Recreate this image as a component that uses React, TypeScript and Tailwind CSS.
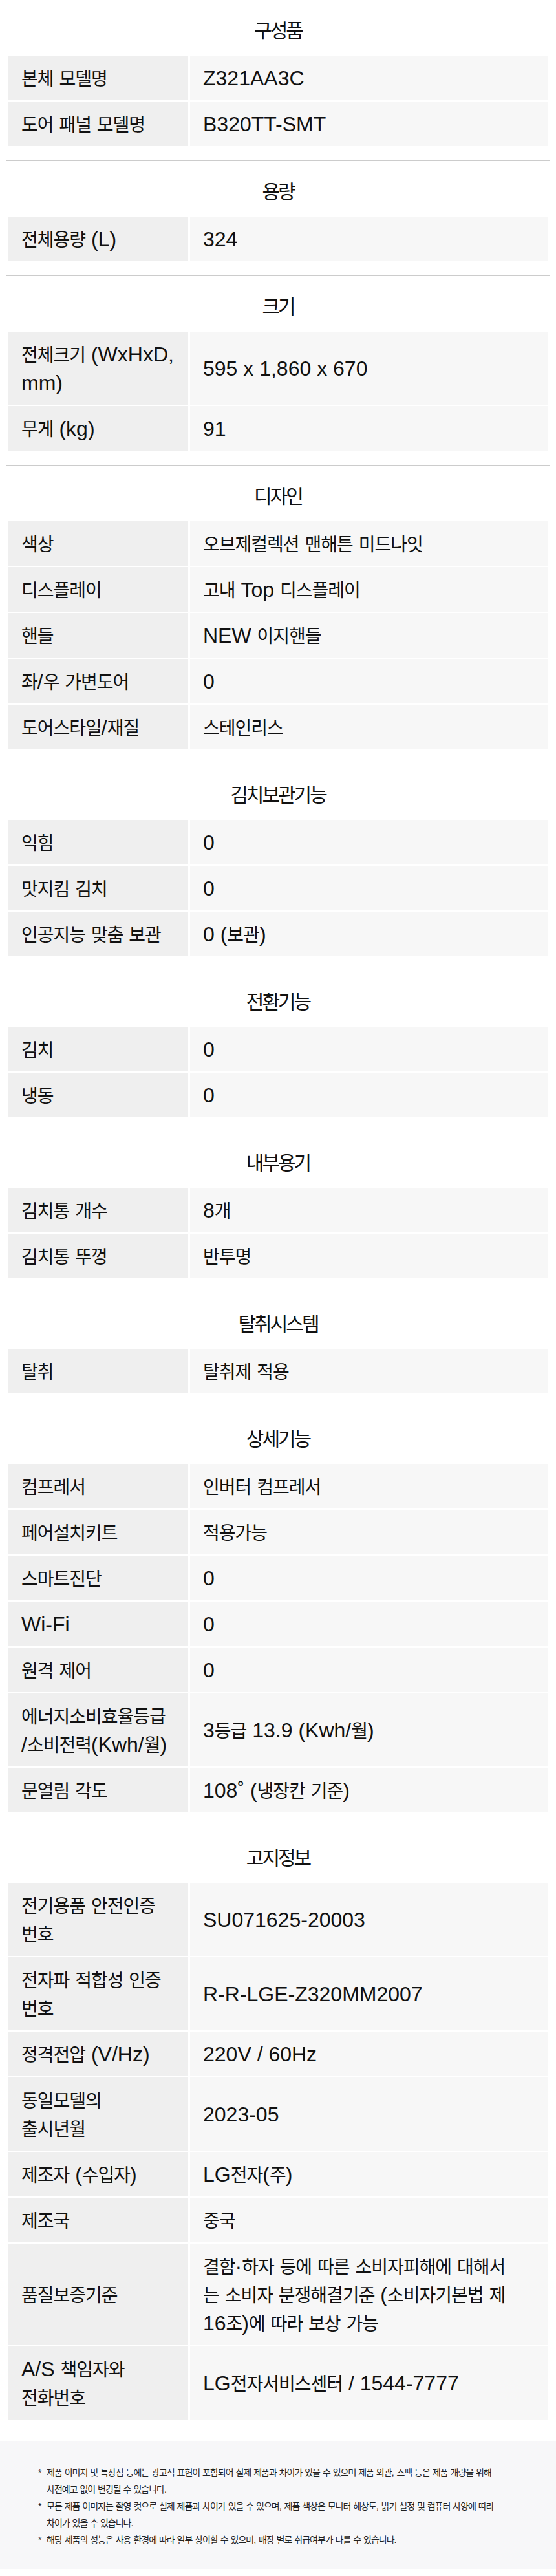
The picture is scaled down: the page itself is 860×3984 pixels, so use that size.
import { Fragment } from "react";

type Row = [string, string];
type Section = { title: string; rows: Row[] };

const SECTIONS: Section[] = [
  {
    title: "구성품",
    rows: [
      ["본체 모델명", "Z321AA3C"],
      ["도어 패널 모델명", "B320TT-SMT"],
    ],
  },
  { title: "용량", rows: [["전체용량 (L)", "324"]] },
  {
    title: "크기",
    rows: [
      ["전체크기 (WxHxD,\nmm)", "595 x 1,860 x 670"],
      ["무게 (kg)", "91"],
    ],
  },
  {
    title: "디자인",
    rows: [
      ["색상", "오브제컬렉션 맨해튼 미드나잇"],
      ["디스플레이", "고내 Top 디스플레이"],
      ["핸들", "NEW 이지핸들"],
      ["좌/우 가변도어", "0"],
      ["도어스타일/재질", "스테인리스"],
    ],
  },
  {
    title: "김치보관기능",
    rows: [
      ["익힘", "0"],
      ["맛지킴 김치", "0"],
      ["인공지능 맞춤 보관", "0 (보관)"],
    ],
  },
  {
    title: "전환기능",
    rows: [
      ["김치", "0"],
      ["냉동", "0"],
    ],
  },
  {
    title: "내부용기",
    rows: [
      ["김치통 개수", "8개"],
      ["김치통 뚜껑", "반투명"],
    ],
  },
  { title: "탈취시스템", rows: [["탈취", "탈취제 적용"]] },
  {
    title: "상세기능",
    rows: [
      ["컴프레서", "인버터 컴프레서"],
      ["페어설치키트", "적용가능"],
      ["스마트진단", "0"],
      ["Wi-Fi", "0"],
      ["원격 제어", "0"],
      ["에너지소비효율등급\n/소비전력(Kwh/월)", "3등급 13.9 (Kwh/월)"],
      ["문열림 각도", "108˚ (냉장칸 기준)"],
    ],
  },
  {
    title: "고지정보",
    rows: [
      ["전기용품 안전인증\n번호", "SU071625-20003"],
      ["전자파 적합성 인증\n번호", "R-R-LGE-Z320MM2007"],
      ["정격전압 (V/Hz)", "220V / 60Hz"],
      ["동일모델의\n출시년월", "2023-05"],
      ["제조자 (수입자)", "LG전자(주)"],
      ["제조국", "중국"],
      [
        "품질보증기준",
        "결함·하자 등에 따른 소비자피해에 대해서\n는 소비자 분쟁해결기준 (소비자기본법 제\n16조)에 따라 보상 가능",
      ],
      ["A/S 책임자와\n전화번호", "LG전자서비스센터 / 1544-7777"],
    ],
  },
];

const NOTES = [
  "제품 이미지 및 특장점 등에는 광고적 표현이 포함되어 실제 제품과 차이가 있을 수 있으며 제품 외관, 스펙 등은 제품 개량을 위해\n사전예고 없이 변경될 수 있습니다.",
  "모든 제품 이미지는 촬영 컷으로 실제 제품과 차이가 있을 수 있으며, 제품 색상은 모니터 해상도, 밝기 설정 및 컴퓨터 사양에 따라\n차이가 있을 수 있습니다.",
  "해당 제품의 성능은 사용 환경에 따라 일부 상이할 수 있으며, 매장 별로 취급여부가 다를 수 있습니다.",
];

// hangul runs get their own size so they sit narrower next to the latin text
const KO_CELL = "text-[28px] leading-none tracking-[-1px]";
const KO_TITLE = "text-[30px] leading-none tracking-[-3px]";
const KO_NOTE = "text-[14px] leading-none tracking-[-1px]";

function Ko({ text, cls }: { text: string; cls: string }) {
  const parts = text.split(/([\uac00-\ud7a3\u3131-\u318e]+)/);
  return (
    <>
      {parts.map((p, i) =>
        i % 2 === 1 ? (
          <span key={i} className={cls}>
            {p}
          </span>
        ) : (
          <Fragment key={i}>{p}</Fragment>
        )
      )}
    </>
  );
}

// one block per line, so wrapped labels break where the sheet breaks them
function Lines({ text, cls }: { text: string; cls: string }) {
  return (
    <div>
      {text.split("\n").map((line) => (
        <div key={line}>
          <Ko text={line} cls={cls} />
        </div>
      ))}
    </div>
  );
}

function SpecSection({ section, first }: { section: Section; first: boolean }) {
  return (
    <section
      className={`mx-[10px] pb-[22px] pt-[25px] ${first ? "" : "border-t border-[#cccccc]"}`}
    >
      <h3 className="mb-4 text-center text-[32px] font-normal leading-[45px] text-[#111]">
        <Ko text={section.title} cls={KO_TITLE} />
      </h3>
      <div className="mx-[2px] grid grid-cols-[279px_1fr] gap-x-[3px] gap-y-[2px]">
        {section.rows.map(([label, value]) => (
          <Fragment key={label}>
            <div className="flex items-center bg-[#efefef] py-[12.5px] pl-[21px] pr-2 text-[32px] leading-[44px] text-[#111]">
              <Lines text={label} cls={KO_CELL} />
            </div>
            <div className="flex items-center bg-[#f7f7f7] py-[12.5px] pl-5 pr-2 text-[32px] leading-[44px] text-[#111]">
              <Lines text={value} cls={KO_CELL} />
            </div>
          </Fragment>
        ))}
      </div>
    </section>
  );
}

export default function App() {
  return (
    <div className="w-[860px] bg-white font-['Liberation_Sans','Noto_Sans_CJK_KR',sans-serif]">
      {SECTIONS.map((s, i) => (
        <SpecSection key={s.title} section={s} first={i === 0} />
      ))}
      <div className="mx-[10px] border-t border-[#cccccc]" />

      <div className="mt-[10px] bg-[#f7f7f9] pb-[32px] pl-[59px] pt-[36px]">
        <ul className="flex flex-col text-[14px] leading-[26px] text-[#222]">
          {NOTES.map((note) => (
            <li key={note} className="flex">
              <span className="w-[13px] shrink-0">*</span>
              <div className="whitespace-nowrap">
                <Lines text={note} cls={KO_NOTE} />
              </div>
            </li>
          ))}
        </ul>
      </div>
    </div>
  );
}
